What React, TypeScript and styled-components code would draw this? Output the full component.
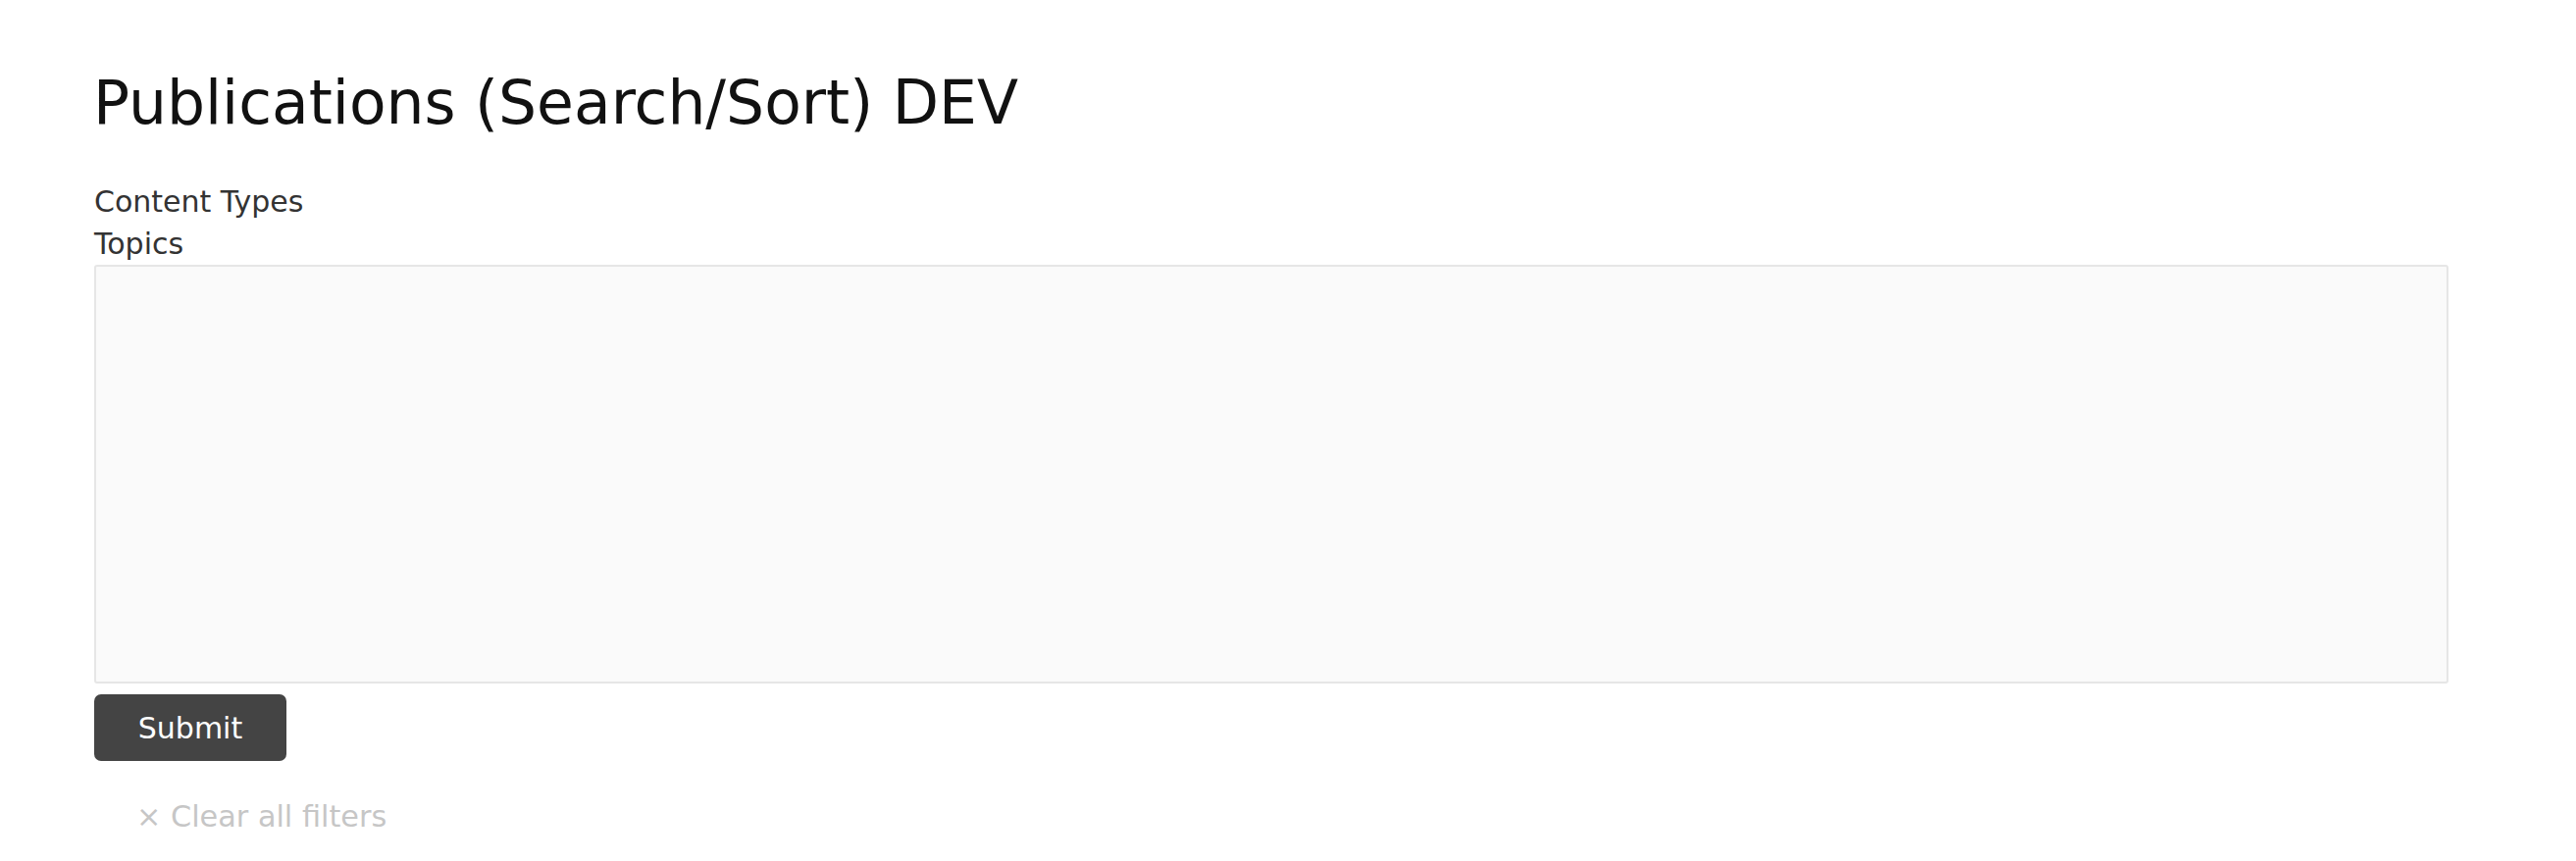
import React from 'react';
import styled, { createGlobalStyle } from 'styled-components';

const GlobalStyle = createGlobalStyle`
  html, body {
    margin: 0;
    padding: 0;
    background: #fff;
  }

  body {
    font-family: "DejaVu Sans", Verdana, sans-serif;
  }
`;

const Page = styled.main`
  padding: 70px 0 0 96px;
  width: 2400px;
`;

const Title = styled.h1`
  margin: 0 0 44px -1px;
  font-size: 61.5px;
  font-weight: 400;
  line-height: 71px;
  color: #111;
`;

const FilterLabel = styled.div`
  font-size: 30px;
  line-height: 42.6px;
  color: #333;
`;

const TopicsPanel = styled.div`
  box-sizing: border-box;
  height: 427px;
  background: #fafafa;
  border: 2px solid #e6e6e6;
  border-radius: 3px;
`;

const SubmitButton = styled.button`
  display: flex;
  align-items: center;
  justify-content: center;
  margin-top: 11px;
  width: 196px;
  height: 68px;
  padding: 0;
  border: none;
  border-radius: 7px;
  background: #444;
  color: #fff;
  font-family: inherit;
  font-size: 30px;
  cursor: pointer;
`;

const ClearFilters = styled.a`
  display: block;
  margin: 35px 0 0 43px;
  font-size: 30.3px;
  line-height: 43px;
  color: #c6c6c6;
  text-decoration: none;
  cursor: pointer;
`;

const App: React.FC = () => (
  <>
    <GlobalStyle />
    <Page>
      <Title>Publications (Search/Sort) DEV</Title>
      <FilterLabel>Content Types</FilterLabel>
      <FilterLabel>Topics</FilterLabel>
      <TopicsPanel />
      <SubmitButton type="button">Submit</SubmitButton>
      <ClearFilters>× Clear all filters</ClearFilters>
    </Page>
  </>
);

export default App;
